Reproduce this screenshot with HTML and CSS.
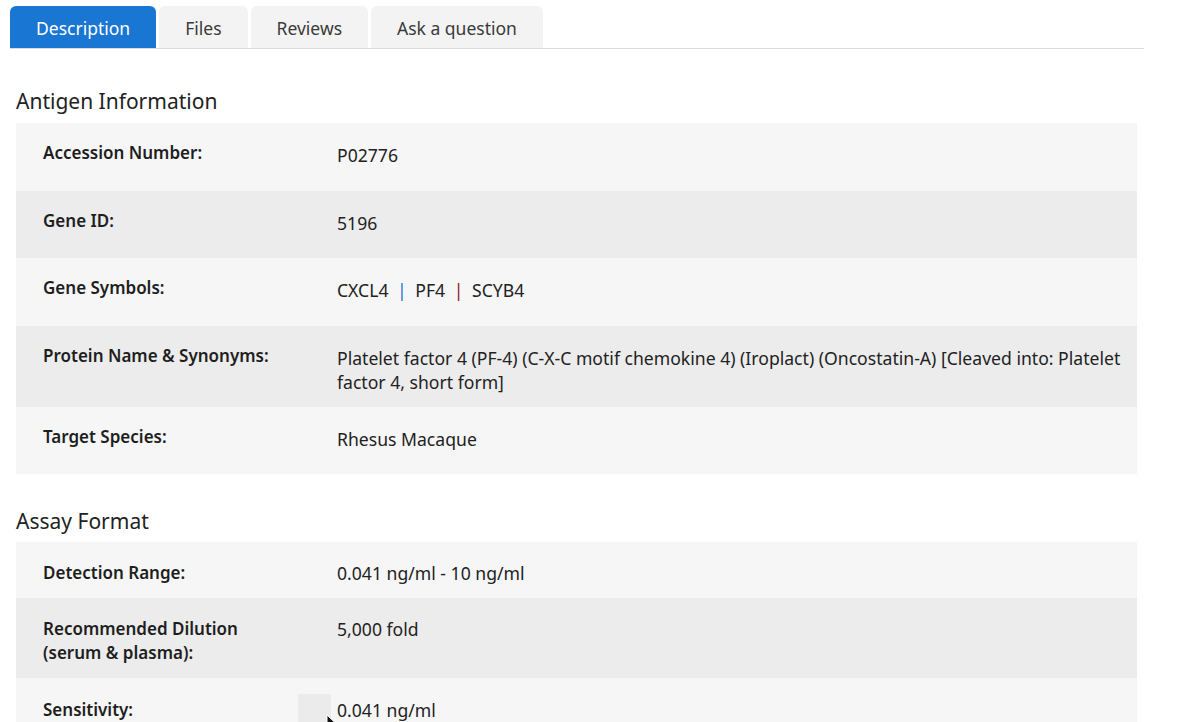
FILE: index.html
```html
<!DOCTYPE html>
<html>
<head>
<meta charset="utf-8">
<link rel="stylesheet" href="styles.css">
</head>
<body>
<div class="page">
  <div class="tabs">
    <div class="tab active">Description</div>
    <div class="tab">Files</div>
    <div class="tab">Reviews</div>
    <div class="tab">Ask a question</div>
  </div>
  <div class="content">
    <h2 class="section-title first">Antigen Information</h2>
    <div class="table antigen">
      <div class="row light"><div class="label">Accession Number:</div><div class="value">P02776</div></div>
      <div class="row dark"><div class="label">Gene ID:</div><div class="value">5196</div></div>
      <div class="row light"><div class="label">Gene Symbols:</div><div class="value">CXCL4 <span class="sep blue">|</span> PF4 <span class="sep red">|</span> SCYB4</div></div>
      <div class="row dark"><div class="label">Protein Name &amp; Synonyms:</div><div class="value">Platelet factor 4 (PF-4) (C-X-C motif chemokine 4) (Iroplact) (Oncostatin-A) [Cleaved into: Platelet factor 4, short form]</div></div>
      <div class="row light"><div class="label">Target Species:</div><div class="value">Rhesus Macaque</div></div>
    </div>
    <h2 class="section-title second">Assay Format</h2>
    <div class="table assay">
      <div class="row light"><div class="label">Detection Range:</div><div class="value">0.041 ng/ml - 10 ng/ml</div></div>
      <div class="row dark"><div class="label">Recommended Dilution<br>(serum &amp; plasma):</div><div class="value">5,000 fold</div></div>
      <div class="row light sens"><div class="label">Sensitivity:</div><div class="value">0.041 ng/ml</div></div>
    </div>
  </div>
  <div class="hover-box"></div>
  <svg class="cursor" width="12" height="18" viewBox="0 0 12 18"><path d="M1 1 L1 15 L4.5 11.5 L7 17 L9 16 L6.5 10.5 L11 10.5 Z" fill="#111" stroke="#fff" stroke-width="1"/></svg>
</div>
</body>
</html>
```

FILE: styles.css
```css
* { box-sizing: border-box; }
html, body { margin: 0; padding: 0; background: #fff; }
body {
  font-family: "Noto Sans", "Open Sans", "Liberation Sans", sans-serif;
  color: #222;
  height: 722px;
  overflow: hidden;
}
.page { position: relative; padding: 6px 0 0 10px; width: 1144px; }
.tabs {
  display: flex;
  gap: 3px;
  border-bottom: 1px solid #dcdcdc;
  height: 43px;
}
.tab {
  height: 42px;
  padding: 2px 26px 0;
  display: flex;
  align-items: center;
  font-size: 17.5px;
  color: #3a3a3a;
  background: #f3f3f3;
  border-radius: 6px 6px 0 0;
}
.tab.active { background: #1976d2; color: #fff; }
.content { padding-left: 6px; }
.section-title {
  margin: 0;
  font-size: 21px;
  font-weight: 400;
  color: #222;
  line-height: 28px;
  padding: 33px 0 8px;
}
.section-title.first { padding-top: 38px; }
.section-title.second { padding-bottom: 7px; }
.table { width: 1121px; }
.row {
  display: grid;
  grid-template-columns: 294px 1fr;
  padding: 20px 12px 13px 27px;
  font-size: 17px;
  line-height: 24px;
}
.assay .row { padding-top: 19px; }
.assay .row.sens { padding-top: 20px; }
.antigen .row { min-height: 67.5px; }
.row.light { background: #f6f6f6; }
.row.dark { background: #ececec; }
.label { font-weight: 600; color: #1e1e1e; }
.antigen .row .label { margin-top: -2px; }
.value { color: #222; font-size: 17.6px; }
.sep { margin: 0 4px; }
.sep.blue { color: #1976d2; }
.sep.red { color: #8b1a1a; }
.hover-box {
  position: absolute;
  left: 298px;
  top: 694px;
  width: 33px;
  height: 40px;
  background: #ebebeb;
}
.cursor { position: absolute; left: 326px; top: 714px; }
```
